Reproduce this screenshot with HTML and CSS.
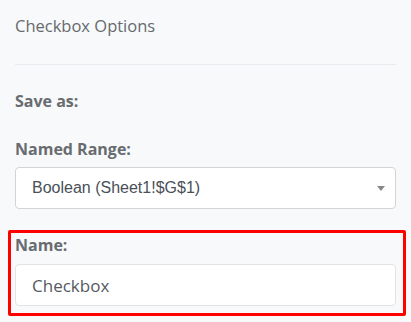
FILE: index.html
```html
<!DOCTYPE html>
<html lang="en">
<head>
    <meta charset="UTF-8">
    <meta name="viewport" content="width=device-width, initial-scale=1.0">
    <title>Checkbox Options</title>
    <link rel="stylesheet" href="styles.css">
</head>
<body>

    <!-- Panel title -->
    <div class="panel-title">Checkbox Options</div>
    <div class="divider"></div>

    <!-- Options -->
    <div class="section-label">Save as:</div>

    <div class="form-group">
        <label class="field-label">Named Range:</label>
        <div class="select-box">
            <span class="select-text">Boolean (Sheet1!$G$1)</span>
            <svg class="select-arrow" width="8" height="5" viewBox="0 0 8 5">
                <path d="M0 0 L8 0 L4 5 Z" fill="#888"/>
            </svg>
        </div>
    </div>

    <div class="form-group highlight">
        <label class="field-label">Name:</label>
        <input type="text" class="text-input" value="Checkbox">
    </div>

</body>
</html>
```

FILE: styles.css
```css
body {
    font-family: "Open Sans", Arial, sans-serif;
    background-color: #f8f9fa;
    color: #6c757d;
    margin: 0;
    padding: 14px 15px 0 15px;
    font-size: 16px;
    line-height: 24px;
}

/* Title */
.panel-title {
    color: #666a6e;
    font-size: 16.5px;
}

.divider {
    height: 1px;
    background: #e9ecef;
    margin-top: 26px;
}

.section-label {
    font-weight: bold;
    color: #686c70;
    margin-top: 24px;
}

/* Form groups */
.form-group {
    margin-top: 24px;
}

.field-label {
    display: block;
    font-weight: bold;
    color: #686c70;
}

.select-box {
    display: flex;
    align-items: center;
    justify-content: space-between;
    height: 40px;
    margin-top: 6px;
    padding: 0 10px 0 16px;
    background: white;
    border: 1px solid #d4d4d4;
    border-radius: 4px;
}

.select-text {
    font-family: "Liberation Sans", Arial, sans-serif;
    font-size: 16px;
    color: #495057;
}

.select-arrow {
    display: block;
}

/* Highlighted group */
.highlight {
    margin: 21px -10px 0 -7px;
    padding: 0 7px 7px 4px;
    border: 3px solid #ff0000;
    border-radius: 2px;
}

.text-input {
    display: block;
    box-sizing: border-box;
    width: 100%;
    height: 42px;
    margin-top: 7px;
    padding: 0 16px;
    background: white;
    border: 1px solid #e3e3e3;
    border-radius: 4px;
    font-family: "Open Sans", Arial, sans-serif;
    font-size: 17px;
    color: #555a5f;
    outline: none;
}
```
